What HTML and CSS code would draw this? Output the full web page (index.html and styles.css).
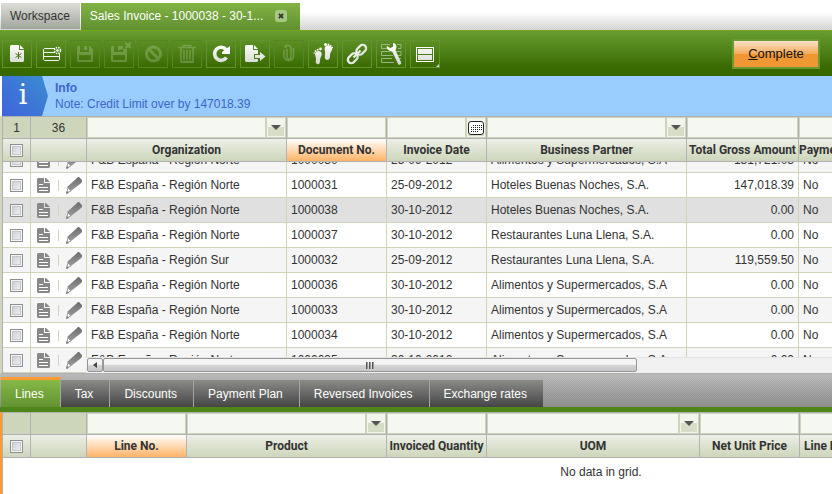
FILE: index.html
```
<!DOCTYPE html>
<html lang="en">
<head>
    <meta charset="UTF-8">
    <meta name="viewport" content="width=device-width, initial-scale=1.0">
    <title>Sales Invoice</title>
    <link rel="stylesheet" href="styles.css">
</head>
<body>
    <!-- shared icons -->
    <svg class="defs" width="0" height="0" aria-hidden="true">
        <defs>
            <linearGradient id="shine" gradientUnits="userSpaceOnUse" x1="0" y1="4" x2="0" y2="24">
                <stop offset="0" stop-color="#fff"/>
                <stop offset="1" stop-color="#d6d9d2"/>
            </linearGradient>
            <linearGradient id="steel" x1="0" y1="0" x2="0" y2="1">
                <stop offset="0" stop-color="#6c6c6c"/>
                <stop offset="1" stop-color="#9a9a9a"/>
            </linearGradient>
            <symbol id="icon-form" viewBox="0 0 13 16">
                <path fill="#888" d="M1 1h6v5h6v9l-1 1H1l-1-1V2z"/>
                <path fill="#888" d="M8 1h1l4 4H8z"/>
                <path stroke="#fff" d="M2 7.500h4M2 10.500h9M2 13.500h9"/>
            </symbol>
            <symbol id="icon-edit" viewBox="0 0 16 17">
                <path fill="url(#steel)" d="M10 2l2-2h1l3 3v2l-2 2L5 14 1 10z"/>
                <path fill="#fff" stroke="#999" d="M2 11l3 3-4.500 2z"/>
                <path fill="#777" d="M0 17l1-3 2 2z"/>
            </symbol>
        </defs>
    </svg>

    <nav class="top-tabs">
        <a href="#" class="top-tab">Workspace</a>
        <a href="#" class="top-tab active">Sales Invoice - 1000038 - 30-1...</a>
        <button class="close" aria-label="Close tab">
            <svg width="6" height="6" viewBox="0 0 7 7"><path d="M1 1l5 5M6 1L1 6" stroke="#333" stroke-width="2"/></svg>
        </button>
    </nav>

    <header class="toolbar">
        <div class="tools">
            <button class="tool" aria-label="New document">
                <svg viewBox="1 1 28 26"><path fill="url(#shine)" d="M9 5h8v5h5v11l-1 1H9l-1-1V6z"/><path fill="#fff" d="M18 5l4 4h-4z"/><path d="M16.500 12v7M13.500 13.500l6 4M19.500 13.500l-6 4" stroke="#47761b"/></svg>
            </button>
            <button class="tool" aria-label="New row">
                <svg viewBox="1 1 28 26"><path d="M19 8.500H8.500l-1 1v10l1 1h14l1-1v-6M8 12.500h11M8 16.500h15" fill="none" stroke="#f4f4f4"/><circle cx="21.500" cy="10.500" r="3" fill="none" stroke="#fff" stroke-width="1.500" stroke-dasharray="1.400 1"/><circle cx="21.500" cy="10.500" r="1.300" fill="#fff"/></svg>
            </button>
            <button class="tool" aria-label="Save" disabled>
                <svg viewBox="1 1 28 26"><path fill="#fff" fill-rule="evenodd" d="M8 6h12l3 3v12l-1 1H8l-1-1V7zM10 6v6h9V6h-2v4h-3V6zM9 15v5h12v-5z"/></svg>
            </button>
            <button class="tool" aria-label="Save and close" disabled>
                <svg viewBox="1 1 28 26"><path fill="#fff" fill-rule="evenodd" d="M8 6h11v3h4v12l-1 1H8l-1-1V7zM10 6v6h9v-3h-2v1h-3V6zM9 15v5h12v-5z"/><path d="M21.500 3l5 5M26.500 3l-5 5" stroke="#fff" stroke-width="2"/></svg>
            </button>
            <button class="tool" aria-label="Undo" disabled>
                <svg viewBox="1 1 28 26"><circle cx="15.500" cy="14" r="7" fill="none" stroke="#fff" stroke-width="3"/><path d="M10.500 9l10 10" stroke="#fff" stroke-width="3"/></svg>
            </button>
            <button class="tool" aria-label="Delete" disabled>
                <svg viewBox="1 1 28 26"><path d="M6 7.500h18M11.500 7V5.500h7V7M9 8v13.500h12V8M12 10v10M15 10v10M18 10v10" fill="none" stroke="#fff" stroke-width="1.600"/><path d="M8 22.500h14" stroke="#fff"/></svg>
            </button>
            <button class="tool" aria-label="Refresh">
                <svg viewBox="1 1 28 26"><path d="M20 9.500A6.500 6.500 0 1 0 20.500 17.500" fill="none" stroke="url(#shine)" stroke-width="3.600"/><path fill="#fff" d="M24 6v8h-8v-2z"/></svg>
            </button>
            <button class="tool" aria-label="Export">
                <svg viewBox="1 1 28 26"><path fill="url(#shine)" d="M6 5h7v5h5v4h-4v5h4v2l-1 1H6l-1-1V6z"/><path fill="#fff" d="M14 5l4 4h-4z"/><path fill="url(#shine)" d="M15 15h5v-3l5.500 4.500L20 21v-3h-5z"/></svg>
            </button>
            <button class="tool" aria-label="Attachments" disabled>
                <svg viewBox="1 1 28 26"><path d="M13 9v8a2 2 0 0 0 4 0V9a3 3 0 0 0-6-1M10 10v7a5 5 0 0 0 9.500 0V8" fill="none" stroke="#fff" stroke-width="1.700"/></svg>
            </button>
            <button class="tool" aria-label="Audit trail">
                <svg viewBox="1 1 28 26"><g fill="url(#shine)"><path d="M7 14c0-3 4-4 6-2 2 3-1 5-1 8 0 2 0 5-3 4-2-1-1-3-1-5s-1-3-1-5z"/><path d="M24 10c1-3-3-6-6-4-3 3 0 5-1 8 0 2-1 5 2 6 3 0 3-3 3-5s1-3 2-5z"/><circle cx="12.500" cy="9" r="1.400"/><circle cx="9.700" cy="9.800" r="1"/><circle cx="7.500" cy="11" r=".9"/><circle cx="6.300" cy="13" r=".8"/><circle cx="17.500" cy="4.500" r="1.500"/><circle cx="20.500" cy="4.600" r="1"/><circle cx="22.800" cy="5.800" r=".9"/><circle cx="24.300" cy="7.600" r=".8"/></g></svg>
            </button>
            <button class="tool" aria-label="Linked items">
                <svg viewBox="1 1 28 26"><g fill="none" stroke="url(#shine)" stroke-width="2.200" transform="rotate(-45 15 14)"><rect x="3.500" y="10.500" width="11" height="7" rx="3.500"/><rect x="15.500" y="10.500" width="11" height="7" rx="3.500"/><path d="M10 14h10"/></g></svg>
            </button>
            <button class="tool" aria-label="Processes">
                <svg viewBox="1 1 28 26"><path d="M14 4.500H5.500v4H14M14 11.500H5.500v4H17M16 18.500H5.500v4H18M21 4.500h4v4h-3M20 11.500h5v4h-3M23 18.500h2" fill="none" stroke="#9bb483"/><path d="M17 9l6.500 14" stroke="url(#shine)" stroke-width="3.500" stroke-linecap="round"/><path fill="#fff" d="M11 6l3 2 3-1v-4c3 0 4 3 3 6s-4 3-6 2-4-3-3-5z"/></svg>
            </button>
            <button class="tool" aria-label="Toggle view">
                <svg viewBox="1 1 28 26"><rect x="6.500" y="7.500" width="17" height="14" fill="none" stroke="#fff"/><path fill="url(#shine)" d="M8 9h14v5H8zM8 15h14v5H8zM26 27h3v-3z"/></svg>
            </button>
        </div>
        <button class="process"><u>C</u>omplete</button>
    </header>

    <section class="message">
        <div class="message-icon">i</div>
        <div class="message-text">
            <h2>Info</h2>
            <p>Note: Credit Limit over by 147018.39</p>
        </div>
    </section>

    <main class="panel">
        <table class="grid invoices">
            <colgroup><col class="c-check"><col class="c-actions"><col class="c-wide"><col class="c-std"><col class="c-std"><col class="c-wide"><col class="c-total"><col class="c-rest"></colgroup>
            <thead>
                <tr class="filters">
                    <td>1</td>
                    <td>36</td>
                    <td><div class="filter"><input type="text" aria-label="Filter organization"><button class="pick" aria-label="Choose organization"></button></div></td>
                    <td><div class="filter"><input type="text" aria-label="Filter document no."></div></td>
                    <td><div class="filter"><input type="text" aria-label="Filter invoice date"><button class="pick date" aria-label="Choose dates"><svg width="16" height="14" viewBox="0 0 16 14"><rect x=".5" y=".5" width="15" height="13" rx="2.500" fill="#fff" stroke="#222"/><path d="M5 4.500h9M3 6.500h11M3 8.500h11M3 10.500h8" stroke="#222" stroke-dasharray="1 1"/></svg></button></div></td>
                    <td><div class="filter"><input type="text" aria-label="Filter business partner"><button class="pick" aria-label="Choose business partner"></button></div></td>
                    <td><div class="filter"><input type="text" aria-label="Filter total"></div></td>
                    <td><div class="filter"><input type="text" aria-label="Filter payment"></div></td>
                </tr>
                <tr class="titles">
                    <th><input type="checkbox" aria-label="Select all"></th>
                    <th></th>
                    <th>Organization</th>
                    <th class="sorted">Document No.</th>
                    <th>Invoice Date</th>
                    <th>Business Partner</th>
                    <th>Total Gross Amount</th>
                    <th class="start">Payment Complete</th>
                </tr>
            </thead>
        </table>
        <div class="viewport">
            <table class="grid records">
                <colgroup><col class="c-check"><col class="c-actions"><col class="c-wide"><col class="c-std"><col class="c-std"><col class="c-wide"><col class="c-total"><col class="c-rest"></colgroup>
                <tbody id="records"></tbody>
            </table>
            <div class="scrollbar">
                <button class="scroll-left" aria-label="Scroll left"></button>
                <div class="thumb"><i></i><i></i><i></i></div>
            </div>
        </div>
    </main>

    <nav class="child-tabs">
        <a href="#" class="active">Lines</a>
        <a href="#">Tax</a>
        <a href="#">Discounts</a>
        <a href="#">Payment Plan</a>
        <a href="#">Reversed Invoices</a>
        <a href="#">Exchange rates</a>
    </nav>

    <section class="panel child">
        <table class="grid lines">
            <colgroup><col class="c-check"><col class="c-actions"><col class="c-std"><col class="c-wide"><col class="c-std"><col class="c-uom"><col class="c-std"><col class="c-rest"></colgroup>
            <thead>
                <tr class="filters">
                    <td></td>
                    <td></td>
                    <td><div class="filter"><input type="text" aria-label="Filter line no."></div></td>
                    <td><div class="filter"><input type="text" aria-label="Filter product"><button class="pick" aria-label="Choose product"></button></div></td>
                    <td><div class="filter"><input type="text" aria-label="Filter quantity"></div></td>
                    <td><div class="filter"><input type="text" aria-label="Filter UOM"><button class="pick" aria-label="Choose UOM"></button></div></td>
                    <td><div class="filter"><input type="text" aria-label="Filter net unit price"></div></td>
                    <td><div class="filter"><input type="text" aria-label="Filter line net amount"></div></td>
                </tr>
                <tr class="titles">
                    <th><input type="checkbox" aria-label="Select all lines"></th>
                    <th></th>
                    <th class="sorted">Line No.</th>
                    <th>Product</th>
                    <th>Invoiced Quantity</th>
                    <th>UOM</th>
                    <th>Net Unit Price</th>
                    <th class="start spaced">Line Net Amount</th>
                </tr>
            </thead>
            <tbody>
                <tr><td class="empty" colspan="8">No data in grid.</td></tr>
            </tbody>
        </table>
    </section>

    <script src="grid.js"></script>
</body>
</html>
```
FILE: styles.css
```
* {
    box-sizing: border-box;
    margin: 0;
    padding: 0;
}

body {
    font-family: "Liberation Sans", Arial, sans-serif;
    font-size: 12px;
    line-height: 16px;
    color: #333;
    background: #fff;
    min-height: 100vh;
    display: flex;
    flex-direction: column;
    overflow: hidden;
}

button {
    font: inherit;
    cursor: pointer;
}

a {
    color: inherit;
    text-decoration: none;
}

.defs {
    position: absolute;
}

/* window tabs */
.top-tabs {
    display: flex;
    height: 31px;
    padding: 3px 0 0 1px;
    border-bottom: 1px solid #72a91b;
    background:
        repeating-conic-gradient(rgba(255, 255, 255, 0.3) 0 25%, transparent 0 50%) 0 0 / 2px 2px,
        linear-gradient(#fff 40%, #ccc);
}

.top-tab {
    height: 26px;
    margin-right: 1px;
    padding: 5px 10px 5px 9px;
    background: linear-gradient(#dcded8, #a2a59c);
    white-space: nowrap;
}

.top-tab.active {
    height: 27px;
    margin: 0;
    padding-right: 12px;
    color: #fff;
}

.top-tab.active,
.close {
    background:
        repeating-conic-gradient(rgba(0, 0, 0, 0.05) 0 25%, transparent 0 50%) 0 0 / 2px 2px,
        linear-gradient(#86b847, #629331);
}

.close {
    width: 25px;
    height: 27px;
    padding-bottom: 2px;
    border: none;
    display: flex;
    align-items: center;
}

.close svg {
    box-sizing: content-box;
    padding: 3px;
    border-radius: 3px;
    background: #a5c882;
}

/* toolbar */
.toolbar {
    display: flex;
    justify-content: space-between;
    align-items: center;
    height: 45px;
    padding: 0 12px 0 2px;
    background: linear-gradient(#689d31, #376800 85%);
}

.tools {
    display: flex;
    gap: 4px;
}

.tool {
    width: 30px;
    height: 28px;
    border: 1px solid #629331;
    background: none;
}

.tool svg {
    display: block;
    width: 28px;
    height: 26px;
}

.tool:disabled {
    border-color: #558625;
}

.tool:disabled svg {
    opacity: 0.2;
}

.process {
    width: 88px;
    height: 30px;
    border: 2px solid #6b9a34;
    background: linear-gradient(#fbe3cb, #f2ac5c 48%, #ef9732 52%, #ef9732);
    color: #111;
    font-size: 13px;
}

/* message bar */
.message {
    display: flex;
    height: 40px;
    margin-left: 2px;
    background: #9cf;
    color: #3c66c8;
}

.message-icon {
    width: 46px;
    padding-right: 4px;
    background: linear-gradient(45deg, #3f62dc, #3a8dd0);
    clip-path: polygon(0 0, 40px 0, 46px 50%, 40px 100%, 0 100%);
    color: #fff;
    font: 28px/38px "DejaVu Serif", serif;
    text-align: center;
}

.message-text {
    padding: 4px 7px;
}

.message h2 {
    font-size: 12px;
}

/* grids */
.panel {
    border-left: 2px solid #ced7bc;
    border-bottom: 1px solid #b0b0b0;
    overflow: hidden;
}

.panel.child {
    flex: 1;
    border-color: #ff9a33;
    border-bottom: none;
    box-shadow: inset 1px 0 #b0b0b0;
}

.grid {
    width: 1197px;
    table-layout: fixed;
    border-collapse: separate;
    border-spacing: 0;
    border-left: 1px solid #b0b0b0;
}

.c-check { width: 28px; }
.c-actions { width: 56px; }
.c-std { width: 100px; }
.c-wide { width: 200px; }
.c-total { width: 112px; }
.c-uom { width: 213px; }
.c-rest { width: auto; }

.filters td {
    height: 23px;
    border: 1px solid #b0b0b0;
    border-left: none;
    background: #cdd6bb;
    text-align: center;
}

.filter {
    display: flex;
    height: 21px;
    padding: 1px;
    gap: 2px;
}

.filter input {
    flex: 1;
    min-width: 0;
    padding: 0 4px;
    border: none;
    background: #f5f8f0;
    font: inherit;
}

.pick {
    width: 18px;
    border: 1px solid #f1f4ec;
    background: linear-gradient(#f2f5ec 45%, #d6dec8 50%);
    display: flex;
    align-items: center;
    justify-content: center;
}

.pick:not(.date)::after {
    content: "";
    border: 5px solid transparent;
    border-top-color: #555;
    border-bottom: none;
}

.titles th {
    height: 23px;
    border-right: 1px solid #b4b4b4;
    border-bottom: 1px solid #b0b0b0;
    background: linear-gradient(#ecefe7, #cdd6bb);
    font-family: Roboto, Arial, sans-serif;
    font-size: 12px;
    text-align: center;
    white-space: nowrap;
}

.titles .sorted {
    background: linear-gradient(#fff, #ffb366);
}

.titles .start {
    text-align: left;
}

.titles .spaced {
    padding-left: 4px;
}

input[type="checkbox"] {
    appearance: none;
    display: block;
    width: 13px;
    height: 13px;
    margin: 0 auto;
    border: 1px solid #8e8f8f;
    background: linear-gradient(135deg, #c4c9d0, #f6f6f6);
    box-shadow: inset 0 0 0 1px #f4f4f4, inset 0 0 0 2px #c3c6ca;
}

/* records stay scrolled to the last row */
.viewport {
    position: relative;
    display: flex;
    flex-direction: column;
    justify-content: flex-end;
    height: 211px;
    overflow: hidden;
}

.records td {
    height: 25px;
    padding: 0 4px;
    border-right: 1px solid #cdd6b8;
    border-bottom: 1px solid #cdd6b8;
    white-space: nowrap;
}

.records tr:nth-child(odd) {
    background: #f5f5f5;
}

.records tr:nth-child(4n) {
    background: #fff;
}

.records tr.selected {
    background: #e0e0e0;
}

.records .amount {
    text-align: right;
}

.row-actions {
    display: flex;
    justify-content: space-between;
    align-items: center;
    padding-left: 2px;
}

.row-actions a {
    display: flex;
}

.row-actions a:first-child::after {
    content: "";
    width: 1px;
    height: 11px;
    margin: 3px 0 0 8px;
    background: #cdd6b8;
}

.scrollbar {
    position: absolute;
    left: 84px;
    right: 0;
    bottom: 0;
    height: 16px;
    display: flex;
    padding: 0 195px 1px 1px;
    border-top: 1px solid #e4e4e4;
    background: #f0f0f0;
}

.scroll-left,
.thumb {
    border: 1px solid #979797;
    border-radius: 2px;
    background: linear-gradient(#f4f4f4 45%, #d5d5d8 50%, #c6c6ca);
}

.scroll-left {
    width: 16px;
    display: flex;
    align-items: center;
    justify-content: center;
}

.scroll-left::before {
    content: "";
    border: 3px solid transparent;
    border-right: 4px solid #444;
    border-left: none;
}

.thumb {
    flex: 1;
    display: flex;
    align-items: center;
    justify-content: center;
    gap: 1px;
}

.thumb i {
    width: 2px;
    height: 7px;
    background: linear-gradient(90deg, #555 50%, #999 50%);
}

/* child tabs */
.child-tabs {
    display: flex;
    align-items: flex-end;
    height: 38px;
    padding-left: 1px;
    border-bottom: 5px solid #4f8519;
    background:
        repeating-conic-gradient(rgba(80, 80, 80, 0.12) 0 25%, transparent 0 50%) 0 0 / 2px 2px,
        linear-gradient(#c0c0c0, #909090);
}

.child-tabs a {
    height: 27px;
    padding: 6px 16px 5px 14px;
    border-right: 1px solid #a5a5a5;
    background: linear-gradient(#8a8c88, #454545);
    color: #fff;
    white-space: nowrap;
}

.child-tabs a:last-child {
    border-right: none;
}

.child-tabs .active {
    height: 30px;
    border-top: 3px solid #ff9a33;
    background: linear-gradient(#86b847, #629331);
}

.empty {
    padding-top: 6px;
    text-align: center;
    vertical-align: top;
}
```
FILE: grid.js
```
const records = [
    ['F&B España - Región Norte', '1000030', '25-09-2012', 'Alimentos y Supermercados, S.A', '131,721.03', 'No'],
    ['F&B España - Región Norte', '1000031', '25-09-2012', 'Hoteles Buenas Noches, S.A.', '147,018.39', 'No'],
    ['F&B España - Región Norte', '1000038', '30-10-2012', 'Hoteles Buenas Noches, S.A.', '0.00', 'No'],
    ['F&B España - Región Norte', '1000037', '30-10-2012', 'Restaurantes Luna Llena, S.A.', '0.00', 'No'],
    ['F&B España - Región Sur', '1000032', '25-09-2012', 'Restaurantes Luna Llena, S.A.', '119,559.50', 'No'],
    ['F&B España - Región Norte', '1000036', '30-10-2012', 'Alimentos y Supermercados, S.A', '0.00', 'No'],
    ['F&B España - Región Norte', '1000033', '30-10-2012', 'Alimentos y Supermercados, S.A', '0.00', 'No'],
    ['F&B España - Región Norte', '1000034', '30-10-2012', 'Alimentos y Supermercados, S.A', '0.00', 'No'],
    ['F&B España - Región Norte', '1000035', '30-10-2012', 'Alimentos y Supermercados, S.A', '0.00', 'No']
];

const tbody = document.getElementById('records');

records.forEach(record => {
    const row = document.createElement('tr');
    if (record[1] === '1000038') row.className = 'selected';
    row.innerHTML = `
        <td><input type="checkbox" aria-label="Select ${record[1]}"></td>
        <td><div class="row-actions">
            <a href="#" aria-label="Open in form"><svg width="13" height="16"><use href="#icon-form"/></svg></a>
            <a href="#" aria-label="Edit in grid"><svg width="16" height="17"><use href="#icon-edit"/></svg></a>
        </div></td>`;
    record.forEach((value, i) => {
        const cell = document.createElement('td');
        if (i === 4) cell.className = 'amount';
        cell.textContent = value;
        row.appendChild(cell);
    });
    tbody.appendChild(row);
});
```
